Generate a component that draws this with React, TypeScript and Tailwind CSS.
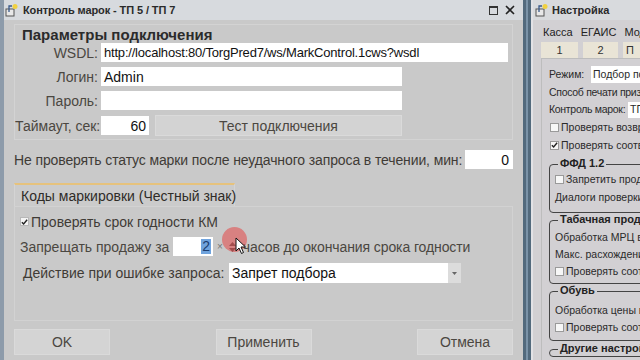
import React from "react";

function Check({ checked, light }: { checked?: boolean; light?: boolean }) {
  return (
    <span className={`shrink-0 inline-flex items-center justify-center w-[9px] h-[9px] border ${light ? "border-[#b8b8b8] bg-[#f4f4f4]" : "border-[#9a9a9a] bg-[#f7f7f7]"}`}>
      {checked && (
        <svg width="8" height="8" viewBox="0 0 8 8">
          <path d="M1 4.2 L3 6.2 L7 1.5" stroke="#222" strokeWidth="1.6" fill="none" />
        </svg>
      )}
    </span>
  );
}

function Label({ children }: { children: React.ReactNode }) {
  return <div className="w-[83px] shrink-0 text-right text-[#4b4741] whitespace-nowrap">{children}</div>;
}

function AppIcon() {
  return (
    <svg width="14" height="14" viewBox="0 0 14 14" className="shrink-0">
      <rect x="1" y="6" width="8" height="7" fill="#e8e8e8" stroke="#555" strokeWidth="1" />
      <path d="M4 9 L4 3 L7 3" stroke="#3a5a8a" strokeWidth="1.3" fill="none" />
      <circle cx="10" cy="3.5" r="2.5" fill="#f0d040" />
    </svg>
  );
}

export default function App() {
  return (
    <div className="w-[640px] h-[360px] overflow-hidden flex bg-[#c8c8c8] font-['Liberation_Sans',Arial,sans-serif] text-[14px] leading-none">
      {/* Main dialog */}
      <div className="w-[523px] h-full flex flex-col border-l-4 border-[#8d9baa] bg-[#c9c9c9] relative shrink-0">
        {/* Title bar */}
        <div className="h-[20px] flex items-center bg-[#d7dade] pl-[1px] pr-[8px] shrink-0">
          <AppIcon />
          <span className="ml-[4px] text-[11px] font-bold text-[#2a2a2a] tracking-[-0.1px]">Контроль марок - ТП 5 / ТП 7</span>
          <div className="ml-auto flex items-center gap-[7px]">
            <span className="w-[9px] h-[9px] border border-[#333] border-t-2" />
            <svg width="10" height="10" viewBox="0 0 10 10">
              <path d="M1 1 L9 9 M9 1 L1 9" stroke="#222" strokeWidth="1.6" />
            </svg>
          </div>
        </div>

        {/* Body */}
        <div className="flex flex-col pl-[10px] pr-[10px]">
          {/* Section 1 */}
          <div className="mt-[4px] h-[116px] border border-[#d3d3d3] flex flex-col">
            <div className="h-[18px] pl-[7px] pt-[2px] text-[15px] font-bold text-[#2b2b2b]">Параметры подключения</div>
            <div className="flex flex-col gap-[5px]">
              <div className="flex items-center gap-[3px] h-[19px]">
                <Label>WSDL:</Label>
                <div className="w-[407px] h-[19px] bg-white flex items-center pl-[3px] text-[13px] tracking-[-0.2px] text-[#111] whitespace-nowrap">http://localhost:80/TorgPred7/ws/MarkControl.1cws?wsdl</div>
              </div>
              <div className="flex items-center gap-[3px] h-[19px]">
                <Label>Логин:</Label>
                <div className="w-[301px] h-[19px] bg-white flex items-center pl-[3px] text-[#111]">Admin</div>
              </div>
              <div className="flex items-center gap-[3px] h-[19px]">
                <Label>Пароль:</Label>
                <div className="w-[301px] h-[19px] bg-white" />
              </div>
              <div className="flex items-center gap-[3px] h-[21px]">
                <Label>Таймаут, сек:</Label>
                <div className="w-[48px] h-[19px] bg-white flex items-center justify-end pr-[3px] text-[#111]">60</div>
                <div className="ml-[3px] w-[247px] h-[21px] bg-[#d3d3d3] border border-[#dadada] flex items-center justify-center text-[#4b4741]">Тест подключения</div>
              </div>
            </div>
          </div>

          {/* No check row */}
          <div className="mt-[10px] flex items-center h-[19px]">
            <span className="text-[#3f3b36] whitespace-nowrap tracking-[-0.12px]">Не проверять статус марки после неудачного запроса в течении, мин:</span>
            <div className="ml-auto w-[48px] h-[19px] bg-white flex items-center justify-end pr-[4px] text-[#111]">0</div>
          </div>

          {/* Tab */}
          <div className="mt-[14px] flex">
            <div className="w-[221px] h-[23px] border-t-2 border-[#e6c27c] border-x border-x-[#d4d4d4] bg-[#cbcbcb] flex items-center pl-[6px] text-[#2f2c28] whitespace-nowrap">Коды маркировки (Честный знак)</div>
          </div>
          <div className="h-[115px] border border-[#d2d2d2] flex flex-col pl-[5px] pt-[8px]">
            <div className="flex items-center gap-[2px] h-[13px]">
              <Check checked light />
              <span className="text-[#3f3b36]">Проверять срок годности КМ</span>
            </div>
            <div className="mt-[9px] flex items-center h-[19px]">
              <span className="w-[153px] text-[#4b4741] whitespace-nowrap">Запрещать продажу за</span>
              <div className="w-[40px] h-[19px] bg-white flex items-center justify-end pr-[2px]">
                <span className="bg-[#6fa3dd] text-[#1b3c6e] px-[1px] leading-[15px]">2</span>
              </div>
              <span className="ml-[4px] text-[10px] text-[#777]">×</span>
              <span className="ml-[6px] flex flex-col items-center gap-[2px] w-[8px]">
                <svg width="7" height="4" viewBox="0 0 7 4"><path d="M0 4 L3.5 0 L7 4Z" fill="#555" /></svg>
                <svg width="7" height="4" viewBox="0 0 7 4"><path d="M0 0 L3.5 4 L7 0Z" fill="#555" /></svg>
              </span>
              <span className="ml-[6px] text-[#4b4741] whitespace-nowrap tracking-[-0.1px]">часов до окончания срока годности</span>
            </div>
            <div className="mt-[7px] flex items-center h-[20px] pl-[3px]">
              <span className="w-[206px] text-[#3f3b36] whitespace-nowrap">Действие при ошибке запроса:</span>
              <div className="w-[219px] h-[20px] bg-white flex items-center pl-[3px] text-[#111]">Запрет подбора</div>
              <div className="w-[13px] h-[20px] bg-[#dcdcdc] flex items-center justify-center">
                <svg width="5" height="3" viewBox="0 0 5 3"><path d="M0 0 L2.5 3 L5 0Z" fill="#666" /></svg>
              </div>
            </div>
          </div>

          {/* Buttons */}
          <div className="mt-[8px] flex justify-between">
            <div className="w-[96px] h-[26px] bg-[#d4d4d4] border border-[#dadada] flex items-center justify-center text-[#4b4741]">OK</div>
            <div className="w-[96px] h-[26px] bg-[#d4d4d4] border border-[#dadada] flex items-center justify-center text-[#4b4741]">Применить</div>
            <div className="w-[96px] h-[26px] bg-[#d4d4d4] border border-[#dadada] flex items-center justify-center text-[#4b4741]">Отмена</div>
          </div>
        </div>

        {/* Cursor highlight overlay */}
        <div className="absolute left-[218px] top-[227px] w-[25px] h-[25px] rounded-full bg-[rgba(228,70,70,0.55)]" />
        <svg className="absolute left-[231px] top-[237px]" width="12" height="18" viewBox="0 0 12 18">
          <path d="M1 1 L1 14 L4 11 L6.5 16.5 L8.5 15.5 L6 10 L10.5 10 Z" fill="#fff" stroke="#111" strokeWidth="1" />
        </svg>
      </div>

      {/* Separator */}
      <div className="w-[8px] h-full bg-[#7b93a8] border-x-[3px] border-[#536a7d] shrink-0" />

      {/* Right window */}
      <div className="flex-1 min-w-0 h-full flex flex-col bg-[#d2d0d3] border-l-2 border-[#e2e2e6] overflow-hidden text-[10.5px]">
        <div className="h-[20px] flex items-center bg-[#d8dadd] pl-[2px] shrink-0">
          <AppIcon />
          <span className="ml-[3px] text-[11px] font-bold text-[#2a2a2a]">Настройка</span>
        </div>
        <div className="h-[18px] flex items-center gap-[8px] pl-[10px] text-[11px] text-[#222] whitespace-nowrap mt-[3px]">
          <span>Касса</span><span>ЕГАИС</span><span>Модули</span>
        </div>
        <div className="flex gap-[5px] pl-[8px] h-[16px] mt-[1px]">
          <div className="w-[37px] shrink-0 bg-[#e9e4d6] flex items-center justify-center text-[11px] text-[#333]">1</div>
          <div className="w-[35px] shrink-0 bg-[#e9e4d6] flex items-center justify-center text-[11px] text-[#333]">2</div>
          <div className="w-[35px] shrink-0 bg-[#e9e4d6] flex items-center pl-[3px] text-[11px] text-[#333]">П</div>
        </div>
        <div className="flex-1 ml-[8px] border-l border-t border-[#bdbdbd] flex flex-col pl-[7px] pt-[7px] text-[#2a2a2a] whitespace-nowrap">
          <div className="flex items-center h-[17px]">
            <span className="w-[42px] shrink-0">Режим:</span>
            <div className="w-[80px] shrink-0 h-[17px] bg-white flex items-center pl-[2px]">Подбор по номеру</div>
          </div>
          <div className="h-[17px] flex items-center mt-[1px] tracking-[-0.3px]">Способ печати признака</div>
          <div className="flex items-center h-[17px]">
            <span className="w-[79px] shrink-0 tracking-[-0.3px]">Контроль марок:</span>
            <div className="w-[40px] shrink-0 h-[16px] bg-white flex items-center pl-[2px]">ТП 5</div>
          </div>
          <div className="flex items-center gap-[2px] h-[18px] pl-[1px]">
            <Check /> <span>Проверять возврат</span>
          </div>
          <div className="flex items-center gap-[2px] h-[18px] pl-[1px]">
            <Check checked /> <span>Проверять соответствие</span>
          </div>
          <fieldset className="mt-[4px] w-[140px] shrink-0 border border-[#444] rounded-[4px] pl-[5px] pb-[6px]">
            <legend className="px-[2px] ml-[3px] h-[13px] font-bold text-[11px] text-[#222]">ФФД 1.2</legend>
            <div className="flex items-center gap-[2px] h-[17px]"><Check /> <span>Запретить продажу</span></div>
            <div className="h-[18px] flex items-center">Диалоги проверки КМ</div>
          </fieldset>
          <fieldset className="mt-[1px] w-[140px] shrink-0 border border-[#444] rounded-[4px] pl-[5px] pb-[3px]">
            <legend className="px-[2px] ml-[3px] h-[13px] font-bold text-[11px] text-[#222]">Табачная продукция</legend>
            <div className="h-[18px] mt-[1px] flex items-center">Обработка МРЦ в марке</div>
            <div className="h-[17px] flex items-center">Макс. расхождение</div>
            <div className="flex items-center gap-[2px] h-[17px]"><Check /> <span>Проверять соответствие</span></div>
          </fieldset>
          <fieldset className="mt-[1px] w-[140px] shrink-0 border border-[#444] rounded-[4px] pl-[5px] pb-[4px]">
            <legend className="px-[2px] ml-[3px] h-[13px] font-bold text-[11px] text-[#222]">Обувь</legend>
            <div className="h-[18px] mt-[3px] flex items-center">Обработка цены в марке</div>
            <div className="flex items-center gap-[2px] h-[17px]"><Check /> <span>Проверять соответствие</span></div>
          </fieldset>
          <fieldset className="mt-[2px] w-[140px] shrink-0 border border-[#444] rounded-[4px] pl-[5px]">
            <legend className="px-[2px] ml-[3px] h-[13px] font-bold text-[11px] text-[#222]">Другие настройки</legend>
          </fieldset>
        </div>
      </div>
    </div>
  );
}
